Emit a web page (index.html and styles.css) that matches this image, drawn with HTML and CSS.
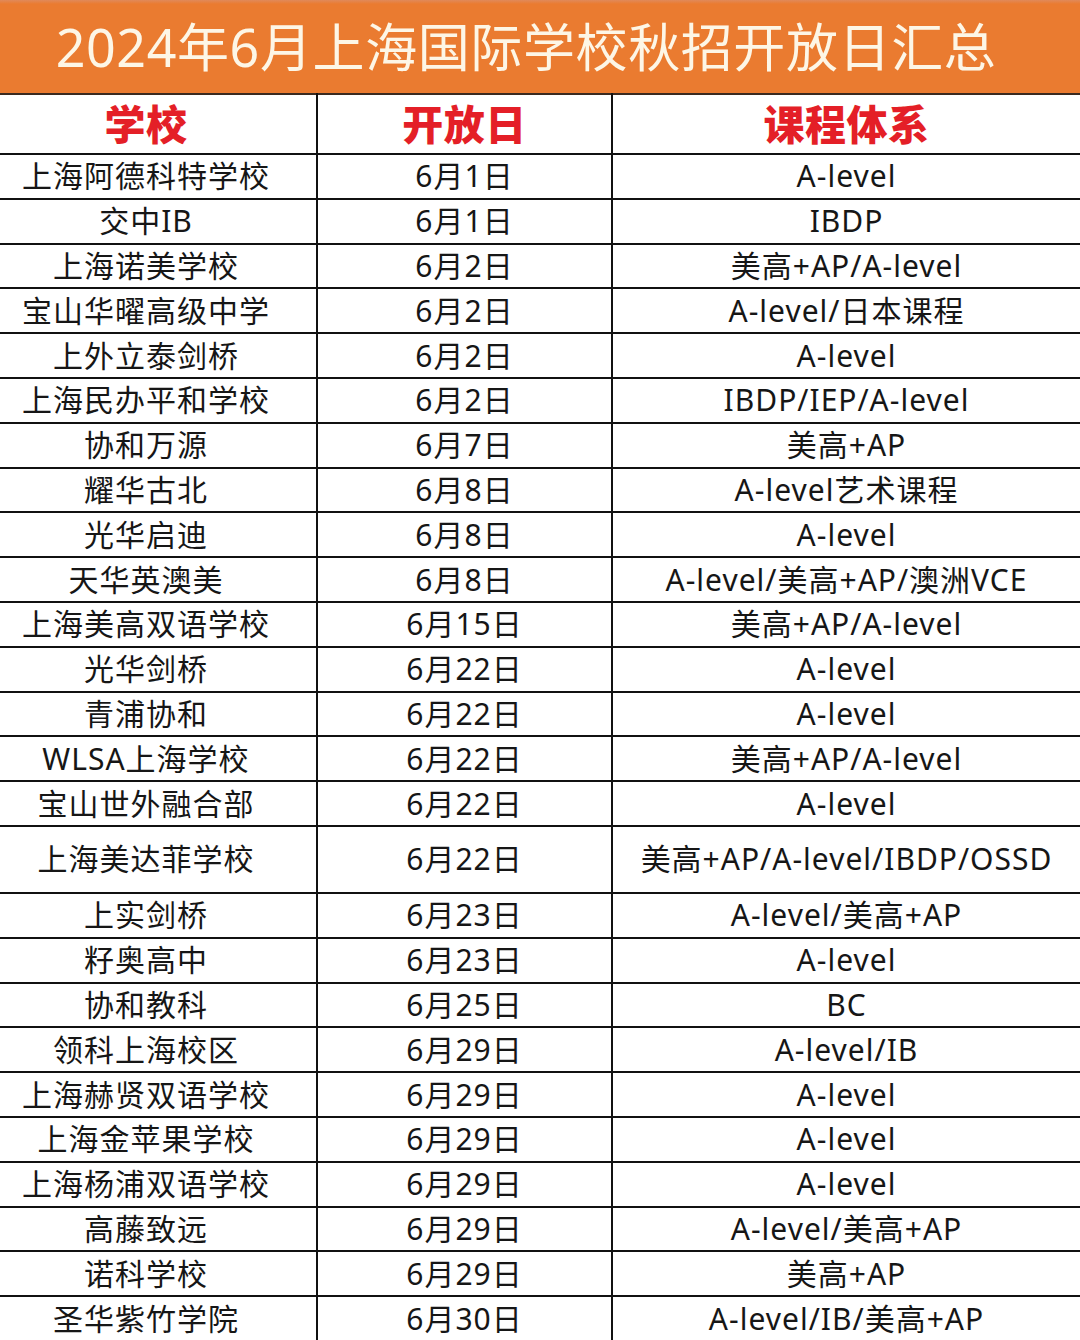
FILE: index.html
```html
<!DOCTYPE html>
<html lang="zh-CN">
<head>
<meta charset="utf-8">
<title>2024年6月上海国际学校秋招开放日汇总</title>
<link rel="stylesheet" href="styles.css">
</head>
<body>
<div class="sheet">
  <header class="banner">2024年6月上海国际学校秋招开放日汇总</header>
  <table class="grid">
    <colgroup><col class="c1"><col class="c2"><col class="c3"></colgroup>
    <thead>
      <tr class="head"><th>学校</th><th>开放日</th><th>课程体系</th></tr>
    </thead>
    <tbody>
      <tr><td>上海阿德科特学校</td><td>6月1日</td><td>A-level</td></tr>
      <tr><td>交中IB</td><td>6月1日</td><td>IBDP</td></tr>
      <tr><td>上海诺美学校</td><td>6月2日</td><td>美高+AP/A-level</td></tr>
      <tr><td>宝山华曜高级中学</td><td>6月2日</td><td>A-level/日本课程</td></tr>
      <tr><td>上外立泰剑桥</td><td>6月2日</td><td>A-level</td></tr>
      <tr><td>上海民办平和学校</td><td>6月2日</td><td>IBDP/IEP/A-level</td></tr>
      <tr><td>协和万源</td><td>6月7日</td><td>美高+AP</td></tr>
      <tr><td>耀华古北</td><td>6月8日</td><td>A-level艺术课程</td></tr>
      <tr><td>光华启迪</td><td>6月8日</td><td>A-level</td></tr>
      <tr><td>天华英澳美</td><td>6月8日</td><td>A-level/美高+AP/澳洲VCE</td></tr>
      <tr><td>上海美高双语学校</td><td>6月15日</td><td>美高+AP/A-level</td></tr>
      <tr><td>光华剑桥</td><td>6月22日</td><td>A-level</td></tr>
      <tr><td>青浦协和</td><td>6月22日</td><td>A-level</td></tr>
      <tr><td>WLSA上海学校</td><td>6月22日</td><td>美高+AP/A-level</td></tr>
      <tr><td>宝山世外融合部</td><td>6月22日</td><td>A-level</td></tr>
      <tr class="tall"><td>上海美达菲学校</td><td>6月22日</td><td>美高+AP/A-level/IBDP/OSSD</td></tr>
      <tr><td>上实剑桥</td><td>6月23日</td><td>A-level/美高+AP</td></tr>
      <tr><td>籽奥高中</td><td>6月23日</td><td>A-level</td></tr>
      <tr><td>协和教科</td><td>6月25日</td><td>BC</td></tr>
      <tr><td>领科上海校区</td><td>6月29日</td><td>A-level/IB</td></tr>
      <tr><td>上海赫贤双语学校</td><td>6月29日</td><td>A-level</td></tr>
      <tr><td>上海金苹果学校</td><td>6月29日</td><td>A-level</td></tr>
      <tr><td>上海杨浦双语学校</td><td>6月29日</td><td>A-level</td></tr>
      <tr><td>高藤致远</td><td>6月29日</td><td>A-level/美高+AP</td></tr>
      <tr><td>诺科学校</td><td>6月29日</td><td>美高+AP</td></tr>
      <tr><td>圣华紫竹学院</td><td>6月30日</td><td>A-level/IB/美高+AP</td></tr>
    </tbody>
  </table>
</div>
</body>
</html>
```

FILE: styles.css
```css
html, body {
  margin: 0;
  padding: 0;
  background: #ffffff;
}
body {
  width: 1080px;
  height: 1340px;
  overflow: hidden;
  font-family: "Noto Sans", "Noto Sans CJK SC", sans-serif;
  color: #161616;
}
.sheet {
  display: flex;
  flex-direction: column;
}
.banner {
  height: 93px;
  box-sizing: border-box;
  background: linear-gradient(#e0895a 0, #ea7b30 4px, #ea7b30 100%);
  color: #fdf6e6;
  font-size: 52px;
  line-height: 93px;
  text-align: center;
  padding: 0 28px 2px 0;
  letter-spacing: 0.6px;
  white-space: nowrap;
}
.grid {
  width: 1080px;
  border-collapse: collapse;
  table-layout: fixed;
}
.c1 { width: 317px; }
.c2 { width: 295px; }
.c3 { width: 468px; }
.grid th,
.grid td {
  border: 2px solid #111111;
  text-align: center;
  vertical-align: middle;
  padding: 0;
  white-space: nowrap;
}
.grid tr > :first-child {
  border-left: none;
  padding-right: 24px;
}
.grid tr > :last-child { border-right: none; }
.grid thead th { border-top: 2px solid #3a2a20; }
.head { height: 60px; }
.head th {
  color: #e41f27;
  font-size: 41px;
  font-weight: 900;
  line-height: 1;
  letter-spacing: 0.5px;
}
.grid tbody tr { height: 44.8px; }
.grid tbody tr.tall { height: 67px; }
.grid td {
  font-size: 30px;
  line-height: 1;
  font-weight: 400;
  letter-spacing: 1px;
}
```
